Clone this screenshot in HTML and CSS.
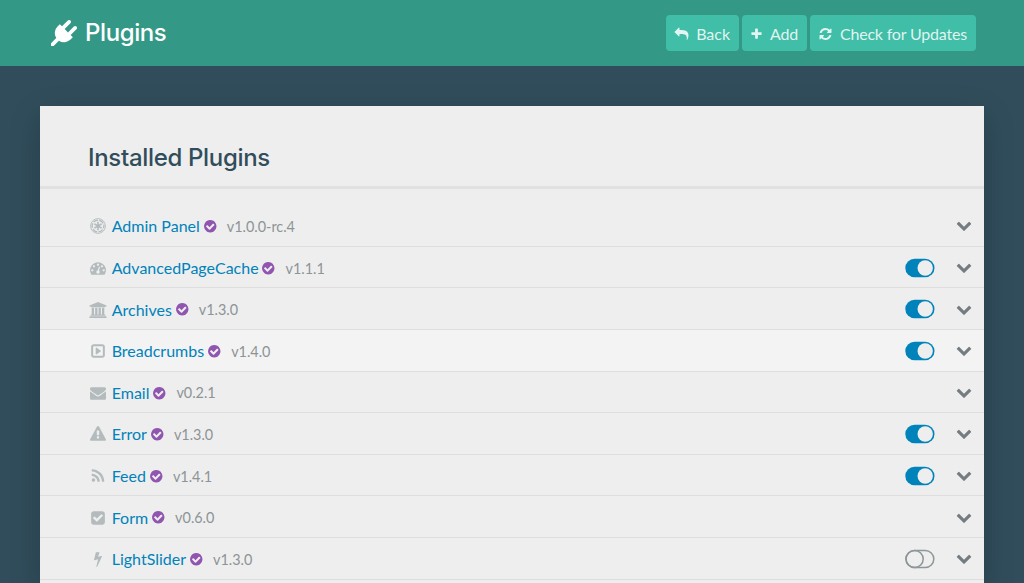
FILE: index.html
```html
<!DOCTYPE html>
<html lang="en">
<head>
<meta charset="utf-8">
<title>Plugins</title>
<link rel="stylesheet" href="styles.css">
</head>
<body>
<svg class="defs" aria-hidden="true">
  <symbol id="plug" viewBox="0 0 1792 1792"><path d="M1755 453q37 38 37 90.5t-37 90.5l-401 400 150 150-160 160q-163 163-389.5 186.5t-411.5-100.5l-362 362h-181v-181l362-362q-124-185-100.5-411.5t186.5-389.5l160-160 150 150 400-401q38-37 91-37t90 37 37 90.5-37 90.5l-400 401 234 234 401-400q38-37 91-37t90 37z"/></symbol>
  <symbol id="reply" viewBox="0 0 1792 1792"><path d="M1792 1120q0 166-127 451-3 7-10.5 24t-13.500 30-13 22q-12 17-28 17-15 0-23.500-10t-8.500-25q0-9 2.500-26.500t2.500-23.500q5-68 5-123 0-101-17.500-181t-48.500-138.500-80-101-105.500-69.500-133-42.500-154-21.500-175.500-6h-224v256q0 26-19 45t-45 19-45-19l-512-512q-19-19-19-45t19-45l512-512q19-19 45-19t45 19 19 45v256h224q713 0 875 403 53 134 53 333z"/></symbol>
  <symbol id="plus" viewBox="0 0 1792 1792"><path d="M1600 736v192q0 40-28 68t-68 28h-416v416q0 40-28 68t-68 28h-192q-40 0-68-28t-28-68v-416h-416q-40 0-68-28t-28-68v-192q0-40 28-68t68-28h416v-416q0-40 28-68t68-28h192q40 0 68 28t28 68v416h416q40 0 68 28t28 68z"/></symbol>
  <symbol id="refresh" viewBox="0 0 1792 1792"><path d="M1639 1056q0 5-1 7-64 268-268 434.500t-478 166.500q-146 0-282.500-55t-243.500-157l-129 129q-19 19-45 19t-45-19-19-45v-448q0-26 19-45t45-19h448q26 0 45 19t19 45-19 45l-137 137q71 66 161 102t187 36q134 0 250-65t186-179q11-17 53-117 8-23 30-23h192q13 0 22.500 9.500t9.500 22.500zm25-800v448q0 26-19 45t-45 19h-448q-26 0-45-19t-19-45 19-45l138-138q-148-137-349-137-134 0-250 65t-186 179q-11 17-53 117-8 23-30 23h-199q-13 0-22.500-9.500t-9.500-22.500v-7q65-268 270-434.500t480-166.500q146 0 284 55.500t245 156.500l130-129q19-19 45-19t45 19 19 45z"/></symbol>
  <symbol id="verified" viewBox="0 0 1792 1792"><path d="M1412 734q0-28-18-46l-91-90q-19-19-45-19t-45 19l-408 407-226-226q-19-19-45-19t-45 19l-91 90q-18 18-18 46 0 27 18 45l362 362q19 19 45 19 27 0 46-19l543-543q18-18 18-45zm252 162q0 209-103 385.500t-279.500 279.500-385.500 103-385.500-103-279.500-279.500-103-385.500 103-385.500 279.500-279.500 385.500-103 385.500 103 279.500 279.500 103 385.500z"/></symbol>
  <symbol id="empire" viewBox="0 0 16 16"><circle cx="8" cy="8" r="7.400" fill="none" stroke="currentColor" stroke-width="0.900"/><circle cx="8" cy="8" r="5.900" fill="none" stroke="currentColor" stroke-width="1.300" stroke-dasharray="4.900 1.280" stroke-dashoffset="2.450"/><circle cx="8" cy="8" r="1.900"/><path d="M7.300 4h1.400L8.300 8l-.6 0zM7.300 12h1.400L8.300 8l-.6 0zM11.100 5.400l.8 1.200L8.200 8.300 7.800 7.700zM4.900 5.400l-.8 1.200 3.700 1.700.4-.6zM11.100 10.600l.8-1.200-3.700-1.700-.4.6zM4.900 10.600l-.8-1.200 3.700-1.700.4.6z" stroke="currentColor" stroke-width="0.500"/></symbol>
  <symbol id="gauge" viewBox="0 0 1792 1792"><path d="M384 1152q0-53-37.500-90.500t-90.500-37.500-90.500 37.500-37.500 90.500 37.500 90.500 90.500 37.500 90.500-37.500 37.500-90.500zm192-448q0-53-37.500-90.500t-90.500-37.500-90.500 37.500-37.500 90.500 37.500 90.500 90.500 37.500 90.500-37.500 37.500-90.500zm428 481l101-382q6-26-7.500-48.500t-38.500-29.500-48 6.500-30 39.500l-101 382q-60 5-107 43.500t-63 98.500q-20 77 20 146t117 89 146-20 89-117q16-60-6-117t-72-91zm660-33q0-53-37.500-90.500t-90.500-37.500-90.500 37.500-37.500 90.500 37.500 90.500 90.500 37.500 90.500-37.500 37.500-90.500zm-640-640q0-53-37.500-90.500t-90.500-37.500-90.500 37.500-37.500 90.500 37.500 90.500 90.500 37.500 90.500-37.500 37.500-90.500zm448 192q0-53-37.500-90.500t-90.500-37.500-90.500 37.500-37.500 90.500 37.500 90.500 90.500 37.500 90.500-37.500 37.500-90.500zm320 448q0 261-141 483-19 29-54 29h-1402q-35 0-54-29-141-221-141-483 0-182 71-348t191-286 286-191 348-71 348 71 286 191 191 286 71 348z"/></symbol>
  <symbol id="bank" viewBox="0 0 1920 1792"><path d="M960 0l960 384v128h-128q0 26-20.500 45t-48.500 19h-1526q-28 0-48.500-19t-20.500-45h-128v-128zm-704 640h256v768h128v-768h256v768h128v-768h256v768h128v-768h256v768h59q28 0 48.500 19t20.500 45v64h-1664v-64q0-26 20.500-45t48.500-19h59v-768zm1595 960q28 0 48.500 19t20.500 45v128h-1920v-128q0-26 20.500-45t48.500-19h1782z"/></symbol>
  <symbol id="caret" viewBox="0 0 1792 1792"><path fill-rule="evenodd" d="M416 128h960q119 0 203.500 84.500t84.500 203.500v960q0 119-84.500 203.500t-203.500 84.500h-960q-119 0-203.500-84.500t-84.500-203.500v-960q0-119 84.500-203.500t203.500-84.500zm0 224q-64 0-64 64v960q0 64 64 64h960q64 0 64-64v-960q0-64-64-64zM741 524l448 320q27 19 27 52t-27 52l-448 320q-31 23-66 5-35-17-35-57v-640q0-40 35-57 35-18 66 5z"/></symbol>
  <symbol id="envelope" viewBox="0 0 1792 1792"><path d="M1792 710v794q0 66-47 113t-113 47h-1472q-66 0-113-47t-47-113v-794q44 49 101 87 362 246 497 345 57 42 92.500 65.500t94.500 48 110 24.500h2q51 0 110-24.500t94.500-48 92.500-65.500q170-123 498-345 57-39 100-87zm0-294q0 79-49 151t-122 123q-376 261-468 325-10 7-42.500 30.500t-54 38-52 32.500-57.500 27-50 9h-2q-23 0-50-9t-57.500-27-52-32.500-54-38-42.500-30.500q-91-64-262-182.500t-205-142.500q-62-42-117-115.500t-55-136.500q0-78 41.500-130t118.500-52h1472q65 0 112.500 47t47.500 113z"/></symbol>
  <symbol id="warning" viewBox="0 0 1792 1792"><path d="M1024 1375v-190q0-14-9.500-23.500t-22.500-9.500h-192q-13 0-22.500 9.500t-9.500 23.500v190q0 14 9.500 23.500t22.500 9.500h192q13 0 22.500-9.500t9.500-23.500zm-2-374l18-459q0-12-10-19-13-11-24-11h-220q-11 0-24 11-10 7-10 21l17 457q0 10 10 16.500t24 6.500h185q14 0 23.500-6.500t10.500-16.500zm-14-934l768 1408q35 63-2 126-17 29-46.500 46t-63.500 17h-1536q-34 0-63.500-17t-46.500-46q-37-63-2-126l768-1408q17-31 47-49t65-18 65 18 47 49z"/></symbol>
  <symbol id="rss" viewBox="0 0 1792 1792"><path d="M576 1344q0 80-56 136t-136 56-136-56-56-136 56-136 136-56 136 56 56 136zm512 123q2 28-17 48-18 21-47 21h-135q-25 0-43-16.500t-20-41.500q-22-229-184.500-391.500t-391.500-184.500q-25-2-41.500-20t-16.500-43v-135q0-29 21-47 17-17 43-17h5q160 13 306 80.500t259 181.500q114 113 181.500 259t80.500 306zm512 2q2 27-18 47-18 20-46 20h-143q-26 0-44.500-17.500t-19.500-42.500q-12-215-101-408.500t-231.500-336-336-231.500-408.500-102q-25-1-42.500-19.500t-17.500-43.500v-143q0-28 20-46 18-18 44-18h3q262 13 501.500 120t425.500 294q187 186 294 425.500t120 501.500z"/></symbol>
  <symbol id="checkbox" viewBox="0 0 1792 1792"><path d="M813 1299l614-614q19-19 19-45t-19-45l-102-102q-19-19-45-19t-45 19l-467 467-211-211q-19-19-45-19t-45 19l-102 102q-19 19-19 45t19 45l358 358q19 19 45 19t45-19zm851-883v960q0 119-84.500 203.500t-203.500 84.500h-960q-119 0-203.500-84.500t-84.500-203.500v-960q0-119 84.500-203.500t203.500-84.500h960q119 0 203.500 84.500t84.500 203.500z"/></symbol>
  <symbol id="bolt" viewBox="0 0 1792 1792"><path d="M1333 566q18 20 7 44l-540 1157q-13 25-42 25-4 0-14-2-17-5-25.500-19t-4.500-30l197-808-406 101q-4 1-12 1-18 0-31-11-18-15-13-39l201-825q4-14 16-23t28-9h328q19 0 32 12.500t13 29.500q0 8-5 18l-171 463 396-98q8-2 12-2 19 0 34 15z"/></symbol>
  <symbol id="chevron" viewBox="0 0 1792 1792"><path d="M1683 808l-742 741q-19 19-45 19t-45-19l-742-741q-19-19-19-45.500t19-45.500l166-165q19-19 45-19t45 19l531 531 531-531q19-19 45-19t45 19l166 165q19 19 19 45.500t-19 45.500z"/></symbol>
  <symbol id="toggle-on" viewBox="0 0 30 20"><rect x="0.300" y="0.700" width="29.200" height="18.600" rx="9.300"/><circle cx="20.200" cy="10" r="7.700" fill="#eee"/></symbol>
  <symbol id="toggle-off" viewBox="0 0 30 20"><g fill="none" stroke="currentColor" stroke-width="1.500"><rect x="1" y="1.400" width="27.800" height="17.200" rx="8.600"/><circle cx="9.600" cy="10" r="8.600"/></g></symbol>
</svg>

<header class="topbar">
  <h1 class="title"><svg class="title-icon"><use href="#plug"/></svg>Plugins</h1>
  <nav class="actions">
    <a class="button"><svg class="button-icon"><use href="#reply"/></svg><span>Back</span></a>
    <a class="button"><svg class="button-icon plus"><use href="#plus"/></svg><span class="short">Add</span></a>
    <a class="button"><svg class="button-icon"><use href="#refresh"/></svg><span class="long">Check for Updates</span></a>
  </nav>
</header>

<main class="panel">
  <h2 class="heading">Installed Plugins</h2>
  <ul class="plugins">
    <li class="row"><svg class="icon"><use href="#empire"/></svg><a class="name">Admin Panel</a><svg class="badge"><use href="#verified"/></svg><span class="version">v1.0.0-rc.4</span><svg class="chevron"><use href="#chevron"/></svg></li>
    <li class="row"><svg class="icon"><use href="#gauge"/></svg><a class="name">AdvancedPageCache</a><svg class="badge"><use href="#verified"/></svg><span class="version">v1.1.1</span><svg class="toggle on"><use href="#toggle-on"/></svg><svg class="chevron"><use href="#chevron"/></svg></li>
    <li class="row"><svg class="icon"><use href="#bank"/></svg><a class="name">Archives</a><svg class="badge"><use href="#verified"/></svg><span class="version">v1.3.0</span><svg class="toggle on"><use href="#toggle-on"/></svg><svg class="chevron"><use href="#chevron"/></svg></li>
    <li class="row active"><svg class="icon"><use href="#caret"/></svg><a class="name">Breadcrumbs</a><svg class="badge"><use href="#verified"/></svg><span class="version">v1.4.0</span><svg class="toggle on"><use href="#toggle-on"/></svg><svg class="chevron"><use href="#chevron"/></svg></li>
    <li class="row"><svg class="icon"><use href="#envelope"/></svg><a class="name">Email</a><svg class="badge"><use href="#verified"/></svg><span class="version">v0.2.1</span><svg class="chevron"><use href="#chevron"/></svg></li>
    <li class="row"><svg class="icon"><use href="#warning"/></svg><a class="name">Error</a><svg class="badge"><use href="#verified"/></svg><span class="version">v1.3.0</span><svg class="toggle on"><use href="#toggle-on"/></svg><svg class="chevron"><use href="#chevron"/></svg></li>
    <li class="row"><svg class="icon"><use href="#rss"/></svg><a class="name">Feed</a><svg class="badge"><use href="#verified"/></svg><span class="version">v1.4.1</span><svg class="toggle on"><use href="#toggle-on"/></svg><svg class="chevron"><use href="#chevron"/></svg></li>
    <li class="row"><svg class="icon"><use href="#checkbox"/></svg><a class="name">Form</a><svg class="badge"><use href="#verified"/></svg><span class="version">v0.6.0</span><svg class="chevron"><use href="#chevron"/></svg></li>
    <li class="row"><svg class="icon"><use href="#bolt"/></svg><a class="name">LightSlider</a><svg class="badge"><use href="#verified"/></svg><span class="version">v1.3.0</span><svg class="toggle"><use href="#toggle-off"/></svg><svg class="chevron"><use href="#chevron"/></svg></li>
  </ul>
</main>
</body>
</html>
```
FILE: styles.css
```css
* { box-sizing: border-box; }
body {
  display: flex;
  flex-direction: column;
  height: 100vh;
  margin: 0;
  background: #314d5b;
  font: 16px/27px Lato, "Liberation Sans", sans-serif;
}
svg { flex: none; fill: currentColor; }
.defs { display: none; }

.topbar {
  display: flex;
  flex: none;
  align-items: center;
  justify-content: space-between;
  height: 66px;
  padding: 0 48px 0 51px;
  background: #349886;
  color: #fff;
}
.title {
  display: flex;
  align-items: center;
  gap: 8px;
  margin: 0;
  font: 500 24px/36px Inter, sans-serif;
  letter-spacing: -0.4px;
}
.title-icon { width: 26px; height: 26px; }
.actions { display: flex; gap: 3px; }
.button {
  display: flex;
  align-items: center;
  gap: 7px;
  height: 36px;
  padding: 1px 9px 0 8px;
  border-radius: 4px;
  background: #41bea8;
  color: rgba(255, 255, 255, 0.85);
}
.button-icon { width: 15px; height: 14px; margin-top: 1px; }
.button-icon.plus { width: 13px; }
.short { letter-spacing: -0.25px; }
.long { letter-spacing: -0.19px; }

.panel {
  flex: 1;
  min-height: 0;
  margin: 40px 40px 0;
  background: #eee;
  box-shadow: 0 10px 30px rgba(0, 0, 0, 0.2);
}
.heading {
  height: 83px;
  margin: 0;
  padding: 34px 48px 0;
  border-bottom: 3px solid #e1e1e1;
  color: #314d5b;
  font: 500 24px/36px Inter, sans-serif;
  letter-spacing: -0.32px;
}
.plugins {
  margin: 0;
  padding: 16.200px 0 0;
  list-style: none;
}
.row {
  display: flex;
  align-items: center;
  height: 41.6px;
  padding: 0 12px 0 49px;
  border-bottom: 1px solid #dedede;
}
.row.active { background: #f3f3f3; }
.icon {
  width: 18px;
  height: 16px;
  margin: 2px 5px 0 0;
  color: #b4bbbd;
}
.name { margin: 1px 0 0 -0.3px; color: #0082ba; }
.badge {
  width: 14.500px;
  height: 14.500px;
  margin: 2px 9.700px 0 2.800px;
  color: #9055af;
}
.version { margin-top: 2px; color: #8d9496; font-size: 14.4px; }
.toggle {
  width: 30px;
  height: 20px;
  margin: 1px 21px 0 auto;
  color: #8d9698;
}
.toggle.on { color: #0082ba; }
.chevron { width: 16px; height: 16px; color: #737c81; }
.version + .chevron { margin-left: auto; }
```
